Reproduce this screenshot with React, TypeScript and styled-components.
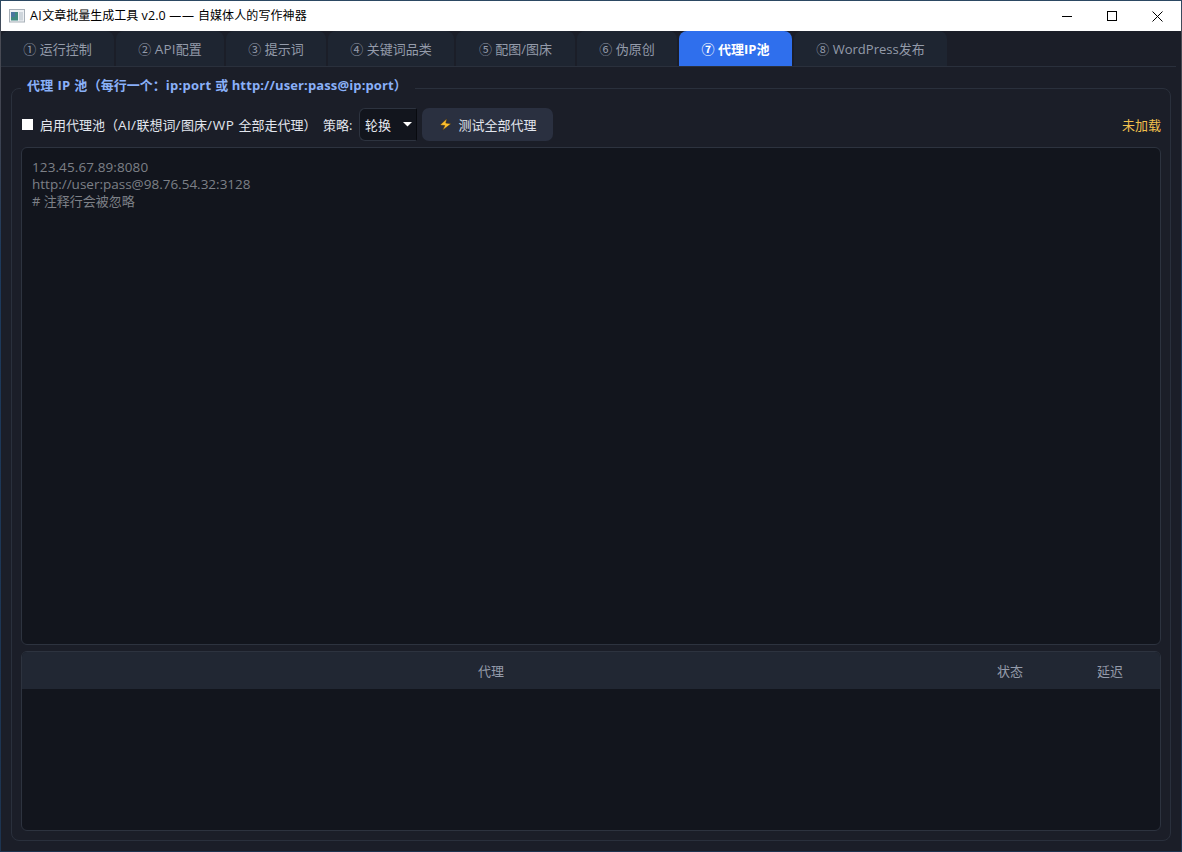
import React from "react";
import styled, { createGlobalStyle } from "styled-components";

const GlobalStyle = createGlobalStyle`
  * { box-sizing: border-box; }
  html, body { margin: 0; padding: 0; }
  body {
    background: #1b1e28;
    font-family: "Open Sans", "Noto Sans CJK SC", sans-serif;
    font-size: 13px;
    color: #e2e6ee;
    overflow: hidden;
  }
`;

const Window = styled.div`
  width: 1182px;
  height: 852px;
  display: flex;
  flex-direction: column;
  background: #1b1e28;
  border: 1px solid;
  border-image: linear-gradient(#2b4863, #4a4c55 4%, #3f4350 15%, #1d3a5c 30%, #1d3450) 1;
`;

const TitleBar = styled.header`
  height: 30px;
  flex: none;
  display: flex;
  align-items: center;
  padding-left: 8px;
  background: #fff;
  color: #000;
  font-size: 12px;
  line-height: 16px;
`;

const AppIcon = styled.svg`
  width: 16px;
  height: 14px;
  margin-right: 5px;
  flex: none;
`;

const Title = styled.span`
  flex: 1;
  white-space: pre;
`;

const Latin = styled.span<{ $size?: number; $gap?: number }>`
  font-size: ${(p) => p.$size ?? 13.5}px;
  letter-spacing: ${(p) => p.$gap ?? 0}px;
`;

const WindowButton = styled.button<{ $width?: number }>`
  width: ${(p) => p.$width ?? 45}px;
  height: 30px;
  padding: 0;
  border: 0;
  background: transparent;
  display: flex;
  align-items: center;
  justify-content: center;
`;

const TabBar = styled.nav`
  display: flex;
  flex: none;
  gap: 2px;
  height: 36px;
  margin-right: 5px;
  border-bottom: 1px solid #2a303c;
`;

const Tab = styled.button<{ $width: number; $active?: boolean }>`
  width: ${(p) => p.$width}px;
  height: 35px;
  padding: 0;
  border: 0;
  border-radius: 8px 8px 0 0;
  font: inherit;
  line-height: 18px;
  white-space: pre;
  background: ${(p) => (p.$active ? "#2f6fed" : "#1e2531")};
  color: ${(p) => (p.$active ? "#ffffff" : "#949baa")};
  font-weight: ${(p) => (p.$active ? 700 : 400)};
`;

const Page = styled.main`
  flex: 1;
  min-height: 0;
  padding: 9px 10px 10px;
  display: flex;
`;

const Group = styled.fieldset`
  flex: 1;
  min-width: 0;
  margin: 0;
  padding: 8px 9px 8px;
  border: 1px solid #2a303c;
  border-radius: 8px;
  display: flex;
  flex-direction: column;
`;

const Legend = styled.legend`
  height: 24px;
  width: 394px;
  padding: 0 0 0 6px;
  line-height: 18px;
  font-weight: 700;
  color: #8ab0f8;
  white-space: pre;
`;

const Toolbar = styled.div`
  display: flex;
  align-items: center;
  height: 33px;
  flex: none;
  white-space: pre;
`;

const CheckLabel = styled.label`
  display: flex;
  align-items: center;
  width: 302px;
`;

const CheckBox = styled.span`
  width: 11px;
  height: 11px;
  margin: 0 7px 0 1px;
  background: #fff;
`;

const FieldName = styled.span`
  width: 36px;
`;

const Select = styled.div`
  width: 58px;
  height: 33px;
  margin-right: 5px;
  padding: 0 4px 0 5px;
  display: flex;
  align-items: center;
  justify-content: space-between;
  background: #12151d;
  border: 1px solid #2d333f;
  border-right-color: #080a0f;
  border-radius: 6px 2px 2px 6px;
`;

const TestButton = styled.button`
  width: 131px;
  height: 33px;
  padding: 0 0 0 1px;
  border: 0;
  border-radius: 7px;
  display: flex;
  align-items: center;
  justify-content: center;
  gap: 6px;
  font: inherit;
  background: #2a3040;
  color: #e2e6ee;
`;

const Status = styled.span`
  margin-left: auto;
  color: #f2c14e;
`;

const ProxyInput = styled.div`
  flex: none;
  height: 498px;
  margin-top: 6px;
  padding: 11px 10px;
  border: 1px solid #2d333f;
  border-radius: 6px;
  background: #12151d;
  color: #7d8087;
  line-height: 17px;
`;

const Line = styled.div`
  height: 17px;
  white-space: pre;
`;

const Table = styled.div`
  flex: none;
  height: 180px;
  margin-top: 6px;
  border: 1px solid #2d333f;
  border-radius: 6px;
  background: #12151d;
  overflow: hidden;
`;

const TableHead = styled.div`
  height: 37px;
  padding-bottom: 1px;
  display: grid;
  grid-template-columns: 1fr 100px 100px;
  align-items: center;
  text-align: center;
  background: #212733;
  color: #949baa;
`;

const tabs = [
  { width: 113, mark: "①", name: "运行控制" },
  { width: 108, mark: "②", latin: "API", name: "配置" },
  { width: 100, mark: "③", name: "提示词" },
  { width: 126, mark: "④", name: "关键词品类" },
  { width: 119, mark: "⑤", name: "配图/图床" },
  { width: 100, mark: "⑥", name: "伪原创" },
  { width: 113, mark: "⑦", name: "代理IP池", active: true },
  { width: 153, mark: "⑧", name: "WordPress发布" },
];

export default function App() {
  return (
    <>
      <GlobalStyle />
      <Window>
        <TitleBar>
          <AppIcon viewBox="0 0 16 14">
            <rect x="0.5" y="0.5" width="15" height="12.5" fill="#eef1f4" stroke="#a9b1b9" />
            <rect x="2" y="3" width="7" height="8.5" fill="#3f8a80" />
            <rect x="2" y="3" width="4" height="5" fill="#4a76a0" />
            <rect x="10" y="3" width="4" height="8.5" fill="#cfd6dc" />
          </AppIcon>
          <Title>
            <Latin $size={12.5} $gap={0.4}>AI</Latin>
            文章批量生成工具
            <Latin $size={12.5} $gap={0.1}> v2.0 </Latin>
            <Latin $size={12} $gap={0.8}>——</Latin>
            <Latin $size={12}> </Latin>
            <Latin $size={12} $gap={0.1}>自媒体人的写作神器</Latin>
          </Title>
          <WindowButton aria-label="最小化">
            <svg width="10" height="10"><path d="M0 5.5H10" stroke="#000" /></svg>
          </WindowButton>
          <WindowButton aria-label="最大化">
            <svg width="10" height="10"><rect x="0.5" y="0.5" width="9" height="9" fill="none" stroke="#000" /></svg>
          </WindowButton>
          <WindowButton $width={47} aria-label="关闭">
            <svg width="11" height="11"><path d="M0.5 0.5L10.5 10.5M10.5 0.5L0.5 10.5" stroke="#000" /></svg>
          </WindowButton>
        </TitleBar>
        <TabBar>
          {tabs.map((t) => (
            <Tab key={t.mark} $width={t.width} $active={t.active}>
              {t.mark} {t.latin && <Latin $gap={0.2}>{t.latin}</Latin>}
              {t.name}
            </Tab>
          ))}
        </TabBar>
        <Page>
          <Group>
            <Legend>
              <Latin $size={13} $gap={0.35}>代理 IP 池</Latin>
              （每行一个：
              <Latin $size={13} $gap={0.3}>ip:port </Latin>
              或
              <Latin $size={13} $gap={0.12}> http://user:pass@ip:port</Latin>
              ）
            </Legend>
            <Toolbar>
              <CheckLabel>
                <CheckBox />
                <span>
                  启用代理池（<Latin $gap={0.4}>AI/</Latin>联想词<Latin $gap={0.6}>/</Latin>图床
                  <Latin $gap={0.6}>/WP </Latin>全部走代理）
                </span>
              </CheckLabel>
              <FieldName>策略:</FieldName>
              <Select>
                轮换
                <svg width="9" height="5"><path d="M0 0H9L4.5 4.5Z" fill="#fff" /></svg>
              </Select>
              <TestButton>
                <svg width="13" height="13" viewBox="0 0 13 13">
                  <path
                    d="M7.8 0.8L1 7L5.8 7.6L3.6 12.2L12 5.8L6.8 5.1Z"
                    fill="#fdbf2d"
                    stroke="#3a2c18"
                    strokeWidth="0.5"
                  />
                </svg>
                测试全部代理
              </TestButton>
              <Status>未加载</Status>
            </Toolbar>
            <ProxyInput>
              <Line><Latin $gap={0.1}>123.45.67.89:8080</Latin></Line>
              <Line><Latin>http://user:pass@98.76.54.32:3128</Latin></Line>
              <Line># 注释行会被忽略</Line>
            </ProxyInput>
            <Table>
              <TableHead>
                <span>代理</span>
                <span>状态</span>
                <span>延迟</span>
              </TableHead>
            </Table>
          </Group>
        </Page>
      </Window>
    </>
  );
}
